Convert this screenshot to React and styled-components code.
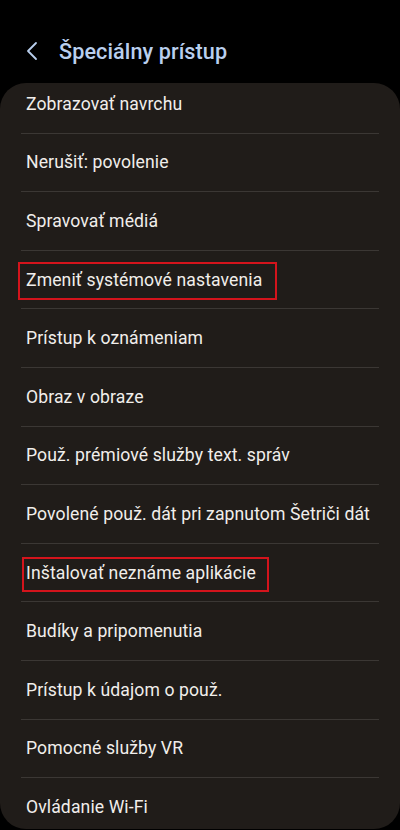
import React from "react";
import styled, { createGlobalStyle } from "styled-components";

const items = [
    { label: "Zobrazovať navrchu" },
    { label: "Nerušiť: povolenie" },
    { label: "Spravovať médiá" },
    { label: "Zmeniť systémové nastavenia", mark: { top: -8, bottom: -10, left: -8, right: -15 } },
    { label: "Prístup k oznámeniam" },
    { label: "Obraz v obraze" },
    { label: "Použ. prémiové služby text. správ" },
    { label: "Povolené použ. dát pri zapnutom Šetriči dát" },
    { label: "Inštalovať neznáme aplikácie", mark: { top: -6, bottom: -9, left: -4, right: -13 } },
    { label: "Budíky a pripomenutia" },
    { label: "Prístup k údajom o použ." },
    { label: "Pomocné služby VR" },
    { label: "Ovládanie Wi-Fi" },
];

export default function App() {
    return (
        <>
            <GlobalStyle />
            <Screen>
                <Header>
                    <BackButton aria-label="Späť">
                        <svg width="14" height="20" viewBox="0 0 14 20">
                            <path d="M11 2 L3 10 L11 18" fill="none" stroke="#b9cfee" strokeWidth="1.8" strokeLinecap="round" strokeLinejoin="round" />
                        </svg>
                    </BackButton>
                    <Title>Špeciálny prístup</Title>
                </Header>
                <Card>
                    <List>
                        {items.map((item, i) => (
                            <Row key={item.label} $last={i === items.length - 1}>
                                <Label>
                                    {item.label}
                                    {item.mark && (
                                        <Mark
                                            $top={item.mark.top}
                                            $bottom={item.mark.bottom}
                                            $left={item.mark.left}
                                            $right={item.mark.right}
                                        />
                                    )}
                                </Label>
                            </Row>
                        ))}
                    </List>
                </Card>
            </Screen>
        </>
    );
}

const GlobalStyle = createGlobalStyle`
    html, body {
        margin: 0;
        padding: 0;
        background: #000000;
    }
    * {
        box-sizing: border-box;
    }
`;

const Screen = styled.div`
    width: 400px;
    height: 830px;
    background: #000000;
    display: flex;
    flex-direction: column;
    overflow: hidden;
    font-family: Roboto, "Noto Sans", sans-serif;
`;

const Header = styled.div`
    height: 83px;
    flex-shrink: 0;
    display: flex;
    align-items: center;
    padding: 19px 0 0 25px;
    gap: 20px;
`;

const BackButton = styled.div`
    width: 14px;
    height: 20px;
    display: flex;
    align-items: center;
    justify-content: center;
`;

const Title = styled.div`
    color: #b9cfee;
    font-size: 21.6px;
    font-weight: 500;
    letter-spacing: 0.1px;
`;

const Card = styled.div`
    flex: 0 0 746px;
    background: #201c19;
    border-radius: 26px;
    overflow: hidden;
`;

const List = styled.div`
    margin-top: -8px;
    padding: 0 21px;
`;

const Row = styled.div`
    height: 58.6px;
    display: flex;
    align-items: center;
    padding-left: 5px;
    border-bottom: ${p => (p.$last ? "none" : "1px solid #3b3734")};
`;

const Label = styled.span`
    position: relative;
    display: inline-block;
    color: #f1eeeb;
    font-size: 17.6px;
    line-height: 20px;
    letter-spacing: 0.1px;
`;

const Mark = styled.span`
    position: absolute;
    top: ${p => p.$top}px;
    bottom: ${p => p.$bottom}px;
    left: ${p => p.$left}px;
    right: ${p => p.$right}px;
    border: 2px solid #d4141c;
    pointer-events: none;
`;
